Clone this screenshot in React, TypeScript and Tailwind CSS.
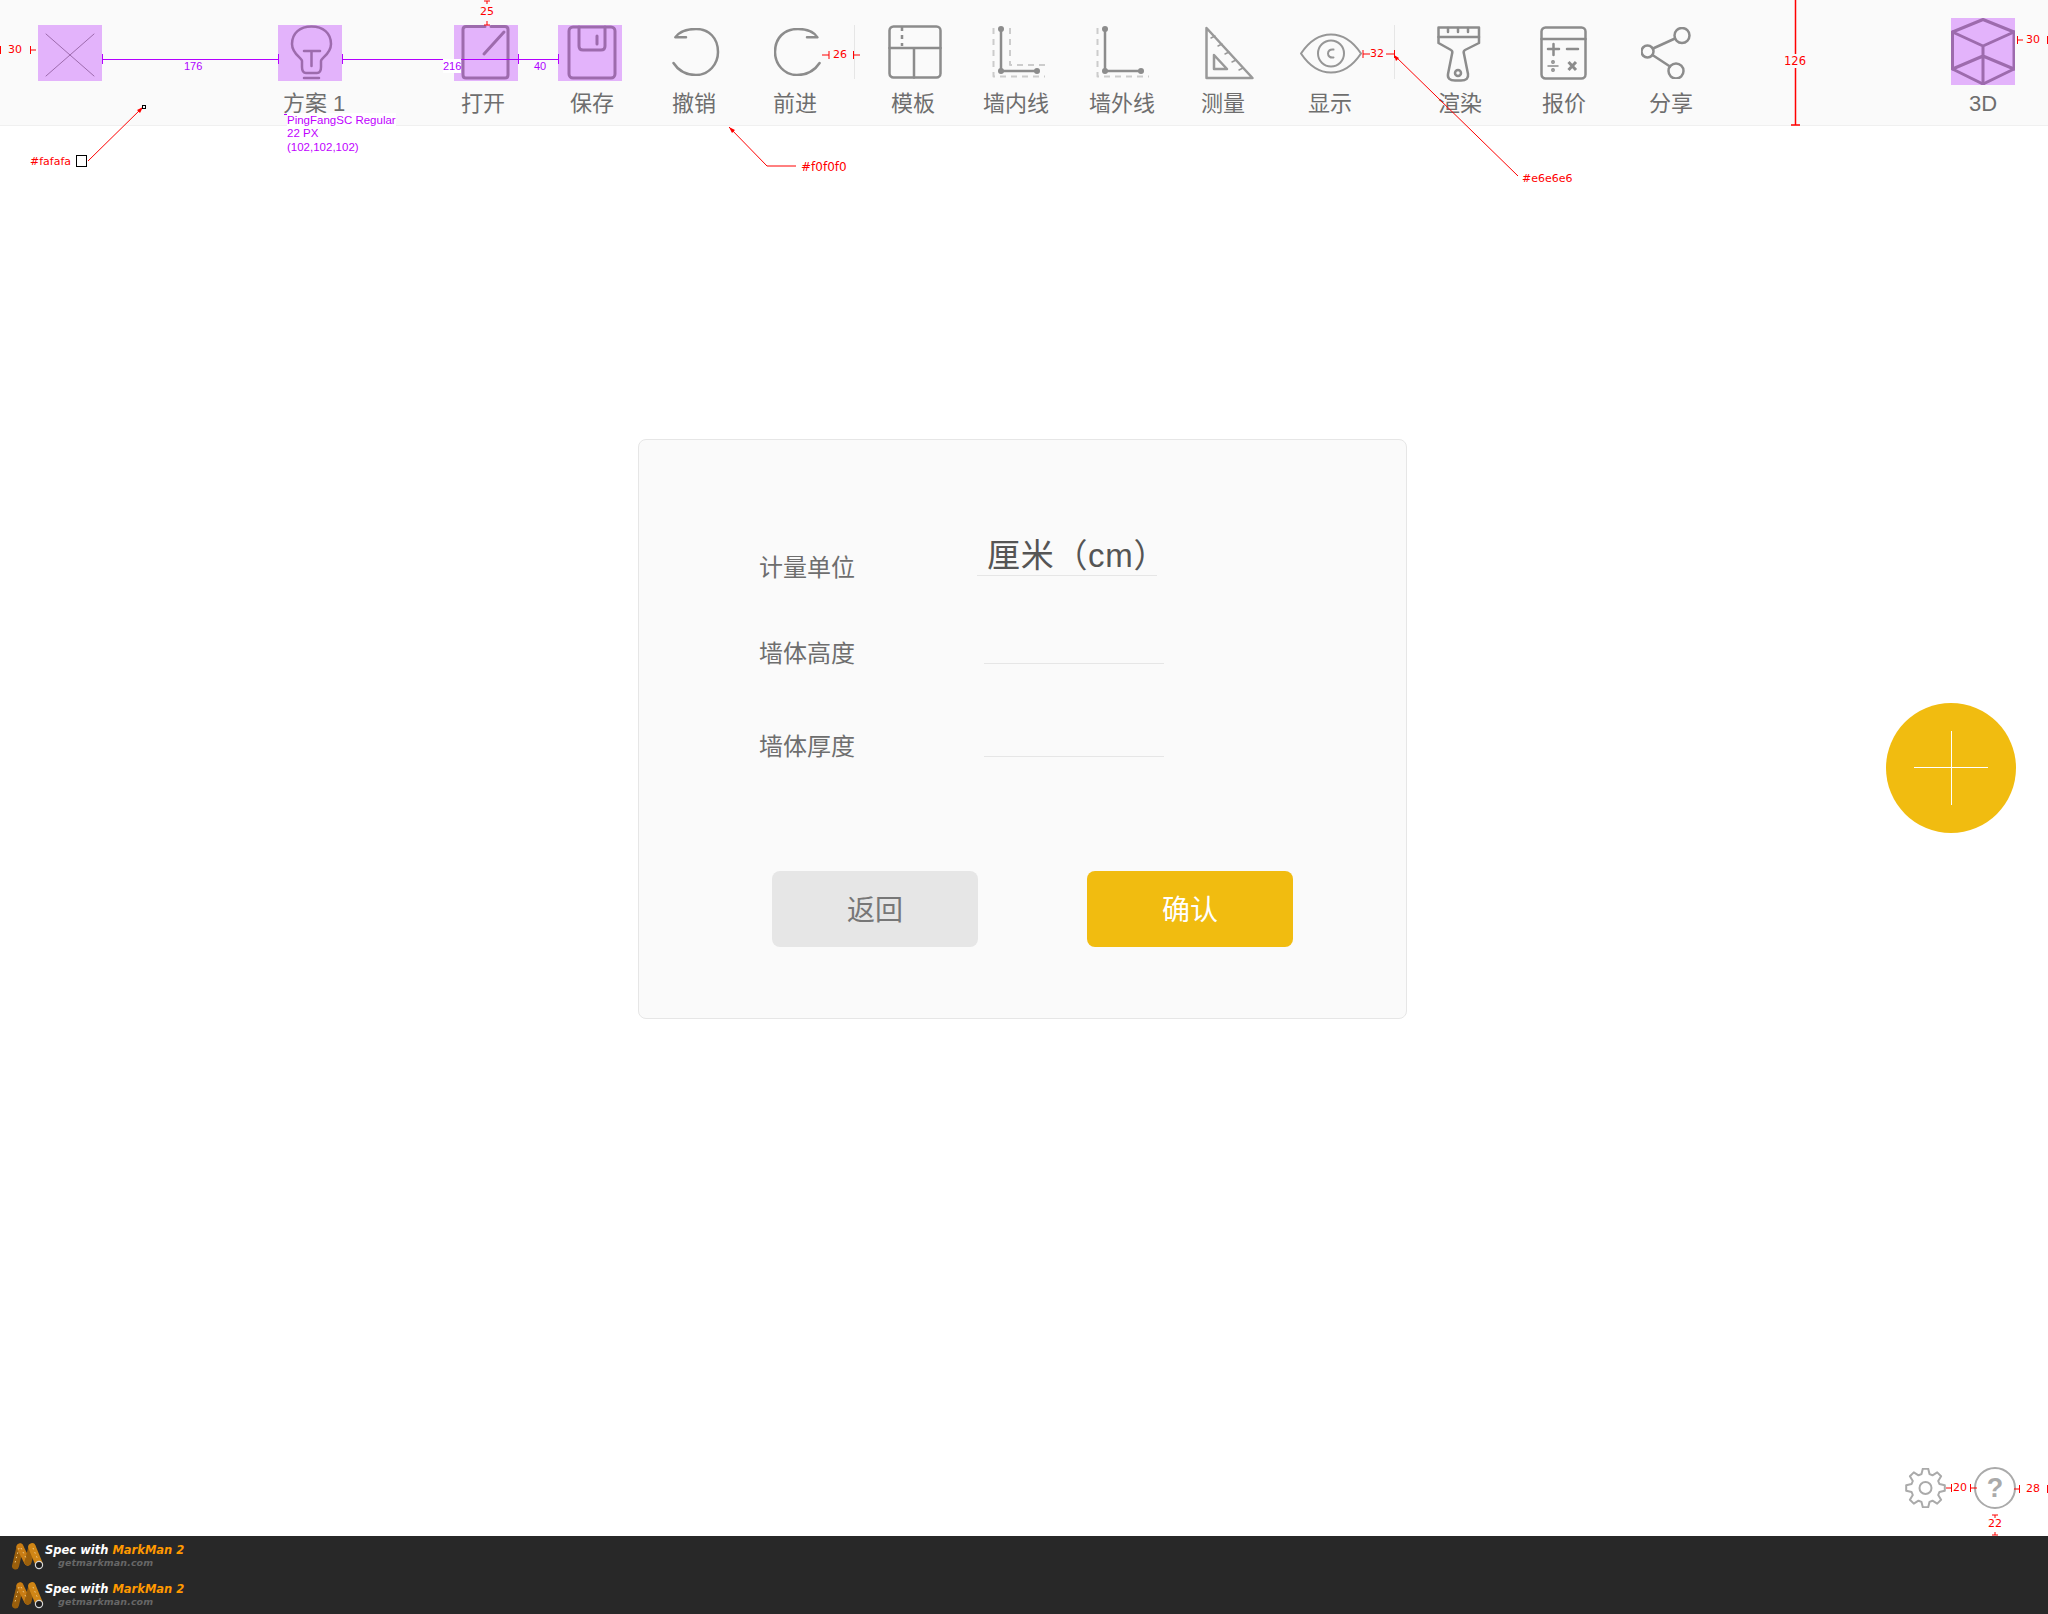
import React from 'react';

const cjk = "font-['Liberation_Sans','Noto_Sans_CJK_SC',sans-serif]";

const Stroke: React.FC<{ className?: string; w: number; h: number; color?: string; sw?: number; children: React.ReactNode }> = ({
  className,
  w,
  h,
  color = '#8c8c8c',
  sw = 2.5,
  children,
}) => (
  <svg
    className={className}
    width={w}
    height={h}
    viewBox={`0 0 ${w} ${h}`}
    fill="none"
    stroke={color}
    strokeWidth={sw}
    strokeLinecap="round"
    strokeLinejoin="round"
  >
    {children}
  </svg>
);

const PURPLE_ICON = '#9d6bad';

const gearPath = (() => {
  const cx = 20.5;
  const cy = 20;
  const pts: string[] = [];
  const teeth = 8;
  for (let i = 0; i < teeth; i++) {
    const a = (i / teeth) * Math.PI * 2 - Math.PI / 2;
    const step = (Math.PI * 2) / teeth;
    const list: [number, number][] = [
      [14.5, a - step * 0.36],
      [19.5, a - step * 0.18],
      [19.5, a + step * 0.18],
      [14.5, a + step * 0.36],
    ];
    list.forEach(([r, t]) => pts.push(`${(cx + r * Math.cos(t)).toFixed(1)} ${(cy + r * Math.sin(t)).toFixed(1)}`));
  }
  return `M${pts.join('L')}Z`;
})();

const MarkLogo = () => (
  <svg className="shrink-0" width="33" height="28" viewBox="0 0 33 28">
    <path d="M8 4 L3.5 23" stroke="#9a5f0c" strokeWidth="7" strokeLinecap="round" />
    <path d="M8 4 L15.5 19" stroke="#c97d14" strokeWidth="7" strokeLinecap="round" />
    <path d="M16 19 L20 4" stroke="#9a5f0c" strokeWidth="7" strokeLinecap="round" />
    <path d="M20 4 L27 21" stroke="#d08616" strokeWidth="7.5" strokeLinecap="round" />
    <path d="M7 5 L3 20 M9 5 L15 17 M21 5 L26 17" stroke="#f0c983" strokeWidth="1" strokeDasharray="1.5 3" />
    <circle cx="27" cy="22" r="3.6" fill="#1c1c1c" stroke="#d8d8d8" strokeWidth="1.2" />
  </svg>
);

const Credit = () => (
  <div className="flex items-start h-[39px] pl-[12px]">
    <MarkLogo />
    <div className="font-['DejaVu_Sans',sans-serif] font-bold italic leading-none">
      <div className="text-[11.5px] mt-[2px] text-white">
        Spec with <span className="text-[#ff9900]">MarkMan 2</span>
      </div>
      <div className="text-[9.5px] mt-[1px] ml-[13px] text-[#666666] tracking-[0.1px]">getmarkman.com</div>
    </div>
  </div>
);

const labels = [
  { text: '方案 1', className: 'ml-[283px] w-[60px]' },
  { text: '打开', className: 'ml-[118px] w-[44px]' },
  { text: '保存', className: 'ml-[65px] w-[44px]' },
  { text: '撤销', className: 'ml-[58px] w-[44px]' },
  { text: '前进', className: 'ml-[57px] w-[44px]' },
  { text: '模板', className: 'ml-[74px] w-[44px]' },
  { text: '墙内线', className: 'ml-[48px] w-[66px]' },
  { text: '墙外线', className: 'ml-[40px] w-[66px]' },
  { text: '测量', className: 'ml-[46px] w-[44px]' },
  { text: '显示', className: 'ml-[63px] w-[44px]' },
  { text: '渲染', className: 'ml-[86px] w-[44px]' },
  { text: '报价', className: 'ml-[60px] w-[44px]' },
  { text: '分享', className: 'ml-[63px] w-[44px]' },
  { text: '3D', className: 'ml-[276px] w-[32px]' },
];

const dv = "font-['DejaVu_Sans',sans-serif]";
const ls = "font-['Liberation_Sans',sans-serif]";
const notes = [
  { text: '30', className: `left-[8px] top-[43px] text-[11px] text-[#ff0000] ${dv}` },
  { text: '25', className: `left-[480px] top-[5px] text-[11px] text-[#ff0000] ${dv}` },
  { text: '176', className: `left-[184px] top-[59px] text-[11px] text-[#b000ff] ${ls}` },
  { text: '216', className: `left-[443px] top-[59px] text-[11px] text-[#b000ff] bg-white ${ls}` },
  { text: '40', className: `left-[534px] top-[59px] text-[11px] text-[#b000ff] ${ls}` },
  { text: 'PingFangSC Regular', className: `left-[287px] top-[113px] text-[11.5px] text-[#c000ff] bg-white ${ls}` },
  { text: '22 PX', className: `left-[287px] top-[126px] text-[11.5px] text-[#c000ff] ${ls}` },
  { text: '(102,102,102)', className: `left-[287px] top-[140px] text-[11.5px] text-[#c000ff] ${ls}` },
  { text: '#fafafa', className: `left-[30px] top-[155px] text-[11px] text-[#ff0000] ${dv}` },
  { text: '#f0f0f0', className: `left-[801px] top-[160px] text-[12px] text-[#ff0000] ${dv}` },
  { text: '#e6e6e6', className: `left-[1522px] top-[172px] text-[11px] text-[#ff0000] ${dv}` },
  { text: '26', className: `left-[833px] top-[48px] text-[11px] text-[#ff0000] ${dv}` },
  { text: '32', className: `left-[1370px] top-[47px] text-[11px] text-[#ff0000] ${dv}` },
  { text: '126', className: `left-[1784px] top-[54px] text-[11.5px] text-[#ff0000] bg-[#fafafa] ${dv}` },
  { text: '30', className: `left-[2026px] top-[33px] text-[11px] text-[#ff0000] ${dv}` },
  { text: '20', className: `left-[1953px] top-[1481px] text-[11px] text-[#ff0000] ${dv}` },
  { text: '28', className: `left-[2026px] top-[1482px] text-[11px] text-[#ff0000] ${dv}` },
  { text: '22', className: `left-[1988px] top-[1517px] text-[11px] text-[#ff0000] ${dv}` },
];

const Field: React.FC<{ label: string; value?: string; rowClass: string; lineClass: string; labelClass: string }> = ({
  label,
  value,
  rowClass,
  lineClass,
  labelClass,
}) => (
  <div className={`flex items-end ${rowClass}`}>
    <span className={`w-[96px] text-[24px] leading-[34px] text-[#6e6e6e] ${labelClass}`}>{label}</span>
    <div className={`w-[180px] h-[48px] border-b border-[#e6e6e6] ${lineClass}`}>
      {value && (
        <span className="block pl-[10px] pt-[5px] text-[33px] leading-[46px] tracking-[0.7px] text-[#555555] whitespace-nowrap">
          {value}
        </span>
      )}
    </div>
  </div>
);

export default function App() {
  return (
    <div className={`relative w-[2048px] h-[1614px] flex flex-col bg-white overflow-hidden ${cjk}`}>
      {/* Toolbar */}
      <header className="h-[126px] shrink-0 bg-[#fafafa] border-b border-[#f0f0f0]">
        <div className="flex items-start h-[86px]">
          {/* logo placeholder */}
          <div className="ml-[38px] mt-[25px] w-[64px] h-[56px] bg-[#e3b3fb]">
            <Stroke w={64} h={56} color={PURPLE_ICON} sw={1}>
              <path d="M8 9 L56 51 M56 9 L8 51" />
            </Stroke>
          </div>
          {/* idea */}
          <div className="ml-[176px] mt-[25px] w-[64px] h-[56px] bg-[#e3b3fb]">
            <Stroke w={64} h={56} color={PURPLE_ICON}>
              <path d="M24 42 V36 C24 33 14 29 14 19 C14 8 22 1.5 33.5 1.5 C45 1.5 53 8 53 19 C53 29 43 33 43 36 V42 C43 47 41 48 39 48 H28 C26 48 24 47 24 42 Z" />
              <path d="M26 53 H41 M26 26 H42 M33.5 26 V41" />
            </Stroke>
          </div>
          {/* open */}
          <div className="ml-[112px] mt-[25px] w-[64px] h-[56px] bg-[#e3b3fb]">
            <Stroke w={64} h={56} color={PURPLE_ICON} sw={3}>
              <path d="M31 1.5 H12 Q9 1.5 9 4.5 V50 Q9 53 12 53 H51 Q54 53 54 50 V4.5 Q54 1.5 51 1.5 H37" />
              <path d="M30 29 L50 7" />
            </Stroke>
          </div>
          {/* save */}
          <div className="ml-[40px] mt-[25px] w-[64px] h-[56px] bg-[#e3b3fb]">
            <Stroke w={64} h={56} color={PURPLE_ICON} sw={3}>
              <rect x="11" y="2" width="46" height="51" rx="4" />
              <path d="M21 2 V21 Q21 25 25 25 H43 Q47 25 47 21 V2 M39 11 V19" />
            </Stroke>
          </div>
          {/* undo */}
          <Stroke className="ml-[50px] mt-[28px]" w={48} h={48}>
            <path d="M1.5 35 C6 42 14 47 24 47 C37 47 46 36 46 24 C46 10 37 1 24 1 C14 1 7 4 3.4 9.3 H14" />
          </Stroke>
          {/* redo */}
          <Stroke className="ml-[54px] mt-[28px]" w={48} h={48}>
            <path d="M45.6 35 C41 42 33 47 23 47 C10 47 1 36 1 24 C1 10 10 1 24 1 C33 1 40 4 43.4 9.3 H33" />
          </Stroke>
          <div className="ml-[32px] mt-[25px] w-px h-[54px] bg-[#e6e6e6]" />
          {/* template */}
          <Stroke className="ml-[33px] mt-[25px]" w={54} h={54} sw={2.5}>
            <rect x="1.5" y="1.5" width="51" height="51" rx="4" />
            <path d="M1.5 23 H52.5 M26 23 V52.5" />
            <path d="M14 2 V21" strokeDasharray="4 4" strokeLinecap="butt" />
          </Stroke>
          {/* inner wall */}
          <Stroke className="ml-[50px] mt-[25px]" w={54} h={54}>
            <path d="M1.5 3 V51.5 H53 M18 3 V40 H53" stroke="#cccccc" strokeDasharray="6 5" strokeLinecap="butt" strokeWidth={2} />
            <path d="M9 4 V46 H45" />
            <circle cx="9" cy="4" r="3" fill="#8c8c8c" stroke="none" />
            <circle cx="9" cy="46" r="3" fill="#8c8c8c" stroke="none" />
            <circle cx="45" cy="46" r="3" fill="#8c8c8c" stroke="none" />
          </Stroke>
          {/* outer wall */}
          <Stroke className="ml-[50px] mt-[25px]" w={54} h={54}>
            <path d="M1.5 3 V51.5 H53" stroke="#cccccc" strokeDasharray="6 5" strokeLinecap="butt" strokeWidth={2} />
            <path d="M9 4 V46 H45" />
            <circle cx="9" cy="4" r="3" fill="#8c8c8c" stroke="none" />
            <circle cx="9" cy="46" r="3" fill="#8c8c8c" stroke="none" />
            <circle cx="45" cy="46" r="3" fill="#8c8c8c" stroke="none" />
          </Stroke>
          {/* measure */}
          <Stroke className="ml-[55px] mt-[26px]" w={50} h={54} color="#999999">
            <path d="M1.5 2 V52 H47.5 Z" />
            <path d="M9 29 V43 H22 Z" />
            <path d="M6 12 L10 10 M13 20 L17 18 M20 28 L24 26 M27 36 L31 34 M34 44 L38 42" strokeWidth={1.5} />
          </Stroke>
          {/* eye */}
          <Stroke className="ml-[45px] mt-[33px]" w={62} h={41} sw={2} color="#969696">
            <path d="M1 20.5 C10 7 20 1.5 31 1.5 C42 1.5 52 7 61 20.5 C52 34 42 39.5 31 39.5 C20 39.5 10 34 1 20.5 Z" />
            <circle cx="31" cy="20.5" r="13" />
            <path d="M33.5 16.5 C30 16 28 18 28 20.5 C28 23 30 25 33.5 24.5" />
          </Stroke>
          <div className="ml-[32px] mt-[25px] w-px h-[54px] bg-[#e6e6e6]" />
          {/* brush */}
          <Stroke className="ml-[42px] mt-[26px]" w={44} h={56} sw={2.5}>
            <path d="M1.5 1.5 H42 V17 L28 24 Q26 25 27 28 L31 48 Q32 54.5 24 54.5 H18 Q10 54.5 11 48 L15 28 Q16 25 14 24 L1.5 17 Z" />
            <path d="M1.5 11 H42 M11 2 V6 M21 2 V6 M31 2 V6" />
            <circle cx="21" cy="47" r="3" />
          </Stroke>
          {/* calc */}
          <Stroke className="ml-[59px] mt-[26px]" w={48} h={54}>
            <rect x="1.5" y="1.5" width="44" height="51" rx="4" />
            <path d="M1.5 13 H45.5 M8 23 H19 M13.5 18 V29 M27 23 H38" />
            <path d="M28.5 36 L36 44 M36 36 L28.5 44" strokeWidth={3} strokeLinecap="butt" />
            <path d="M8 40 H18" strokeWidth={1.5} />
            <circle cx="13" cy="36" r="0.7" fill="#8c8c8c" />
            <circle cx="13" cy="44" r="0.7" fill="#8c8c8c" />
          </Stroke>
          {/* share */}
          <Stroke className="ml-[53px] mt-[27px]" w={52} h={52}>
            <circle cx="41" cy="8.5" r="7.5" />
            <circle cx="6.5" cy="24.5" r="6" />
            <circle cx="35" cy="44" r="7.5" />
            <path d="M12 21.5 L34 11.5 M11.5 28 L29 39.5" />
          </Stroke>
          {/* 3d */}
          <div className="ml-[258px] mt-[18px] w-[64px] h-[67px] bg-[#e3b3fb]">
            <Stroke w={64} h={67} color={PURPLE_ICON} sw={3}>
              <path d="M32 1.5 L63 14 V51 L32 66 L1.5 51 V14 Z" />
              <path d="M1.5 14 L32 28 L63 14 M32 28 V66 M1.5 51 L32 38 L63 51" />
            </Stroke>
          </div>
        </div>
        <div className="flex items-center h-[36px]">
          {labels.map((l) => (
            <span key={l.text} className={`${l.className} shrink-0 whitespace-nowrap text-[22px] leading-[36px] text-[#6e6e6e]`}>
              {l.text}
            </span>
          ))}
        </div>
      </header>

      {/* Main */}
      <main className="flex-1 pl-[638px] pt-[313px]">
        <div className="w-[769px] h-[580px] rounded-[8px] border border-[#e6e6e6] bg-[#fafafa] pl-[120px] pt-[88px]">
          <Field label="计量单位" value="厘米（cm）" rowClass="h-[48px]" lineClass="ml-[122px]" labelClass="-mb-[9px]" />
          <Field label="墙体高度" rowClass="h-[48px] mt-[40px]" lineClass="ml-[129px]" labelClass="-mb-[7px]" />
          <Field label="墙体厚度" rowClass="h-[48px] mt-[45px]" lineClass="ml-[129px]" labelClass="-mb-[7px]" />
          <div className="flex mt-[114px] ml-[13px] gap-[109px]">
            <button className="w-[206px] h-[76px] pt-[3px] rounded-[8px] bg-[#e6e6e6] text-[28px] text-[#777777]">返回</button>
            <button className="w-[206px] h-[76px] pt-[3px] rounded-[8px] bg-[#f1bc10] text-[28px] text-white">确认</button>
          </div>
        </div>
      </main>

      {/* Footer */}
      <footer className="h-[78px] shrink-0 bg-[#282828] pt-[7px]">
        <Credit />
        <Credit />
      </footer>

      {/* Floating add button */}
      <button className="absolute left-[1886px] top-[703px] w-[130px] h-[130px] rounded-full bg-[#f1bc10] flex items-center justify-center">
        <svg width="74" height="74" viewBox="0 0 74 74" stroke="#ffffff" strokeWidth="1">
          <path d="M0 36.5 H74 M37.5 0 V74" />
        </svg>
      </button>

      {/* Settings, help */}
      <svg className="absolute left-[1905px] top-[1468px]" width="41" height="40" viewBox="0 0 41 40" fill="none" stroke="#aaaaaa" strokeWidth="2" strokeLinejoin="round">
        <path d={gearPath} />
        <circle cx="20.5" cy="20" r="6" />
      </svg>
      <div className="absolute left-[1974px] top-[1467px] w-[42px] h-[42px] rounded-full border-2 border-[#aaaaaa] flex items-center justify-center text-[27px] font-bold leading-none text-[#aaaaaa] font-['Liberation_Sans',sans-serif]">
        ?
      </div>

      {/* Spec annotations */}
      <svg className="absolute left-0 top-0 pointer-events-none" width="2048" height="1614" viewBox="0 0 2048 1614" fill="none">
        <g stroke="#b400ff" strokeWidth="1">
          <path d="M102.5 59.5 H278 M102.5 54 V64 M278.5 54 V64" />
          <path d="M342.5 59.5 H518 M342.5 54 V64 M518.5 54 V64" />
          <path d="M518 59.5 H558 M558.5 54 V64" />
          <path d="M284 114.5 H341" />
        </g>
        <g stroke="#ff0000" strokeWidth="1">
          <path d="M0.5 46 V54 M30 50 H36 M30.5 46 V54" />
          <path d="M484 1 H490 M487 1 V4 M484 25 H490 M487 21 V25" />
          <path d="M88 161 L143 107" />
          <path d="M729 127 L767 166 H796" />
          <path d="M822 55 H829 M829 51 V59 M853 55 H860 M853.5 51 V59" />
          <path d="M1363 50 V58 M1363 54 H1370 M1386 54 H1395 M1394.5 50 V58" />
          <path d="M1394 55 L1518 176" />
          <path d="M1795.5 0 V125 M1791 125 H1800" strokeWidth="1.5" />
          <path d="M2017.5 36 V44 M2017 40 H2023 M2047.5 36 V44" />
          <path d="M1946 1488 H1952 M1951.5 1484 V1492 M1970 1488 H1977 M1970.5 1484 V1492" />
          <path d="M2014 1489 H2020 M2019.5 1485 V1493 M2047.5 1485 V1493" />
          <path d="M1992 1515 H1998 M1995 1515 V1518 M1992 1535 H1998 M1995 1532 V1535" />
        </g>
        <path d="M143 107 L137 110 L140 113 Z M729 127 L732 133 L735 130 Z M1394 55 L1396 61 L1399 58 Z" fill="#ff0000" />
        <rect x="76.5" y="155.5" width="10" height="11" stroke="#000000" />
        <rect x="142.5" y="105.5" width="3" height="3" stroke="#000000" />
      </svg>
      {notes.map((n) => (
        <span key={n.text + n.className} className={`absolute leading-[14px] whitespace-nowrap ${n.className}`}>
          {n.text}
        </span>
      ))}
    </div>
  );
}
